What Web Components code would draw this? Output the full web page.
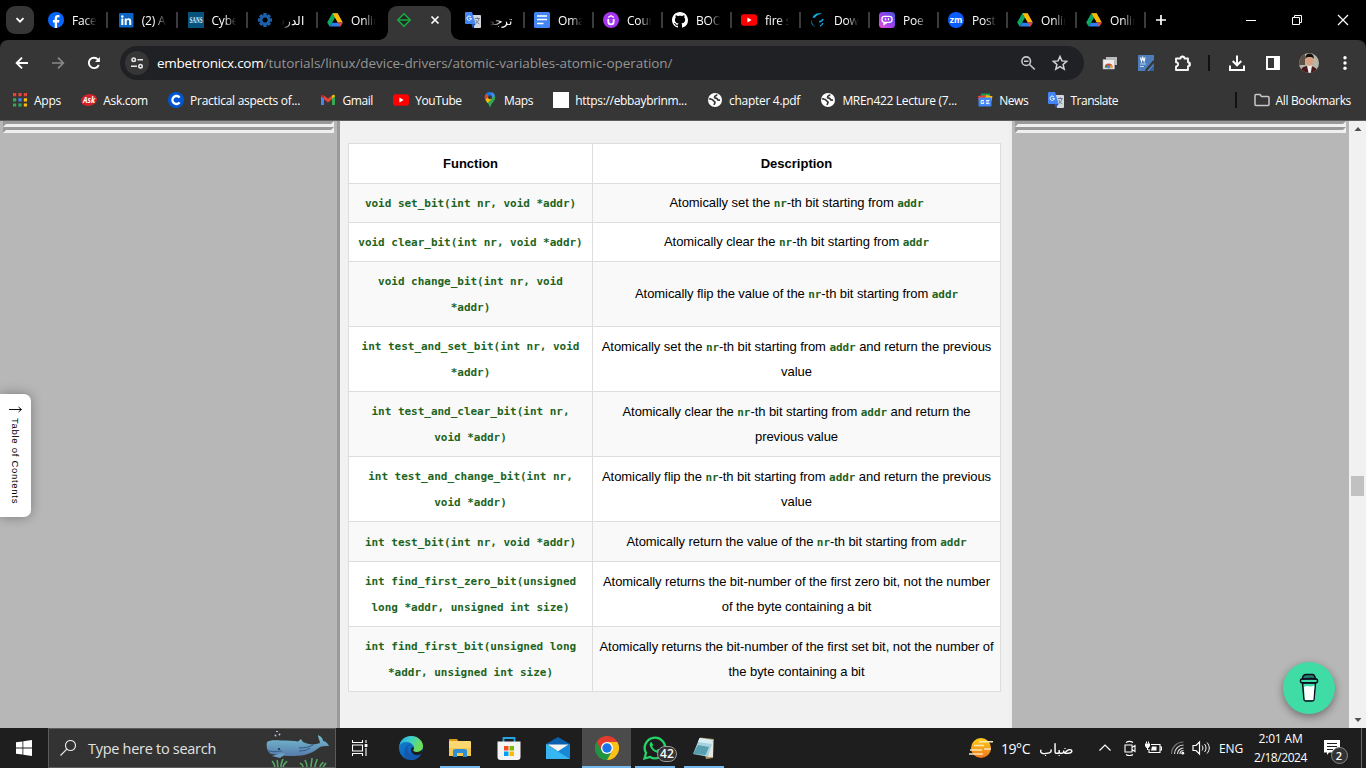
<!DOCTYPE html>
<html lang="en">
<head>
<meta charset="utf-8">
<title>Atomic operations</title>
<style>
html,body{margin:0;height:100%;overflow:hidden;background:#000}
body{font-family:"Open Sans","Noto Sans",sans-serif}
</style>
</head>
<body>
<desktop-screen></desktop-screen>
<script>
const ICONS = {
chev:['0 0 16 16','<path d="M4.500 6.200 8 9.700l3.500-3.500" fill="none" stroke="#fff" stroke-width="1.800"/>'],
fb:['0 0 16 16','<circle cx="8" cy="8" r="8" fill="#0866ff"/><path d="M6.700 16V10.500H4.900V8h1.800V6.500c0-2.400 1.200-3.500 3.200-3.500.7 0 1.300.1 1.600.2v2.100h-1.100c-1 0-1.300.5-1.300 1.300V8h2.300l-.4 2.500H9.100V16z" fill="#fff"/>'],
li:['0 0 16 16','<rect x="1" y="1" width="14.500" height="14.500" rx="1" fill="#0a66c2"/><path d="M3.300 6.500h2v6.600h-2zM6.700 6.500h2v.9c.4-.7 1.100-1.100 2-1.100 1.800 0 2.500 1.100 2.500 3v3.800h-2V9.700c0-1-.2-1.700-1.100-1.700-1 0-1.400.7-1.400 1.700v3.400h-2z" fill="#fff"/><circle cx="4.300" cy="4.500" r="1.200" fill="#fff"/>'],
sans:['0 0 16 16','<path fill="#07527c" d="M0 0h16v16H0z"/><text x="8" y="11" font-family="Liberation Serif" font-weight="bold" font-size="8.500" text-anchor="middle" textLength="13" lengthAdjust="spacingAndGlyphs" fill="#e4eff6">SANS</text>'],
gear:['0 0 16 16','<path d="M8 1v14M1 8h14M3.100 3.100l9.800 9.800M12.900 3.100l-9.800 9.800" stroke="#1d5fa8" stroke-width="3.400"/><circle cx="8" cy="8" r="5.300" fill="#1d5fa8"/><circle cx="8" cy="8" r="2.500" fill="#000"/>'],
drive:['0 0 16 16','<path d="M5.300 1.300h5.400L8 6z" fill="#11893f"/><path d="M10.700 1.300 15.800 10.400h-5.300L5.300 1.300z" fill="#ffba00"/><path d="M5.300 1.300 8 6l-2.600 4.500L2.600 14.600.2 10.400z" fill="#0da960"/><path d="M5.300 10.400h10.500l-2.500 4.200H2.700z" fill="#2f7df0"/><path d="M10.500 10.400h5.300l-2.500 4.200z" fill="#ea4335"/><path d="M8 6l2.600 4.400H5.400z" fill="#000"/>'],
embed:['0 0 16 16','<path d="M8 1.700 14.300 8 8 14.300 1.700 8z" fill="#202a22" stroke="#19b348" stroke-width="1.300"/><path d="M3 8h10" stroke="#19a943" stroke-width="1.500"/>'],
x:['0 0 16 16','<path d="M4.500 4.500l7 7M11.500 4.500l-7 7" stroke="#fff" stroke-width="1.700"/>'],
trans:['0 0 16 16','<path d="M6 3h9a1 1 0 0 1 1 1v11a1 1 0 0 1-1 1H9z" fill="#d3d8df"/><path d="M1 0h6l3.700 12H1a1 1 0 0 1-1-1V1a1 1 0 0 1 1-1z" fill="#4385f4"/><path d="M7.500 16l3.200-4H6.400z" fill="#2455b5"/><path d="M6.400 6.400A2.200 2.200 0 1 1 5.800 4.700M4.400 6.400h2" stroke="#fff" fill="none"/><path d="M9.800 6.500h5M12.300 5.300v1.200M14 6.600c-.5 2.500-1.800 4-3.300 5M10.800 8c.8 2 2 3.200 3.500 4" stroke="#69778a" fill="none"/>'],
docs:['0 0 16 16','<rect width="16" height="16" rx="1.500" fill="#4285f4"/><path d="M3 4h10M3 7.500h10M3 11.500h6.500" stroke="#fff" stroke-width="1.600"/>'],
udemy:['0 0 16 16','<circle cx="8" cy="8" r="8" fill="#a435f0"/><path d="M5.300 7v2.700a2.700 2.700 0 0 0 5.400 0V7" stroke="#fff" stroke-width="1.800" fill="none"/><path d="M5 5.500 8 3.700l3 1.800" stroke="#fff" stroke-width="1.300" fill="none"/>'],
gh:['0 0 16 16','<path fill="#fff" d="M8 0C3.580 0 0 3.580 0 8c0 3.540 2.290 6.530 5.470 7.590.4.070.55-.17.55-.38 0-.19-.01-.82-.01-1.490-2.010.37-2.530-.49-2.690-.94-.09-.23-.48-.94-.82-1.130-.28-.15-.68-.52-.01-.53.63-.01 1.080.58 1.230.82.72 1.210 1.870.87 2.330.66.07-.52.28-.87.51-1.070-1.780-.2-3.640-.89-3.640-3.950 0-.87.31-1.590.82-2.150-.08-.2-.36-1.020.08-2.120 0 0 .67-.21 2.200.82.64-.18 1.320-.27 2-.27s1.360.09 2 .27c1.530-1.040 2.200-.82 2.200-.82.44 1.100.16 1.920.08 2.120.51.56.82 1.270.82 2.150 0 3.070-1.870 3.750-3.650 3.950.29.25.54.73.54 1.480 0 1.070-.01 1.930-.01 2.200 0 .21.15.46.55.38A8.013 8.013 0 0 0 16 8c0-4.420-3.580-8-8-8z"/>'],
yt:['0 0 16 16','<rect y="2.300" width="16" height="11.400" rx="2.600" fill="#f00"/><path d="M6.400 5.600v4.800L10.600 8z" fill="#fff"/>'],
flow:['0 0 16 16','<path d="M2.500 5.800C4 2 7.500.5 12 1.800 9 2.300 6 3.300 4.800 5.800z" fill="#15b0e8"/><path d="M2 7.500c-.7 3 1 6 3.800 7.300-4-.6-5.800-4.300-3.800-7.300z" fill="#087db5"/><path d="M9 9.700c2 0 3.500-1 4-2.700M10 14c1.500-.3 2.500-1.200 2.800-3" stroke="#0c9bd2" stroke-width="1.500" fill="none"/>'],
poe:['0 0 16 16','<defs><linearGradient id="g" x1="1" y1="0" x2="0" y2="1"><stop stop-color="#4053d8"/><stop offset=".5" stop-color="#9a41ee"/><stop offset="1" stop-color="#e755d5"/></linearGradient></defs><rect width="16" height="16" rx="3.500" fill="url(#g)"/><rect x="3" y="4.300" width="10" height="6" rx="2.500" fill="none" stroke="#fff" stroke-width="1.300"/><path d="M6.500 6.300v2M9.500 6.300v2M5 10v2.500l3-2" stroke="#fff" stroke-width="1.300" fill="none"/>'],
zm:['0 0 16 16','<circle cx="8" cy="8" r="8" fill="#0b5cff"/><text x="8" y="10.500" font-family="Open Sans" font-weight="bold" font-size="8.500" text-anchor="middle" fill="#fff" textLength="12.500" lengthAdjust="spacingAndGlyphs">zm</text>'],
plus:['0 0 16 16','<path d="M8 3v10M3 8h10" stroke="#fff" stroke-width="1.700"/>'],
min:['0 0 16 16','<path d="M3 8.500h10" stroke="#fff"/>'],
max:['0 0 16 16','<path d="M3.500 5.500h7v7h-7zM5.500 5V3.500h7v7H11" fill="none" stroke="#fff"/>'],
close:['0 0 16 16','<path d="M3 3l10 10M13 3 3 13" stroke="#fff" stroke-width="1.200"/>'],
back:['0 0 16 16','<path d="M14 8H3M8 2.700 2.700 8 8 13.300" stroke="#fff" stroke-width="1.900" fill="none"/>'],
fwd:['0 0 16 16','<path d="M2 8h11M8 2.700 13.300 8 8 13.300" stroke="#898989" stroke-width="1.700" fill="none"/>'],
reload:['0 0 16 16','<path d="M12.800 10A5.200 5.200 0 1 1 12 4.500L13 6" stroke="#fff" stroke-width="1.900" fill="none"/><path d="M13.900 2v5H9z" fill="#fff"/>'],
tune:['0 0 16 16','<g stroke="#e6e6e6" stroke-width="1.600" fill="none"><circle cx="4.700" cy="4.700" r="1.700"/><path d="M8.500 4.700H14M2 11.200h6"/><circle cx="11.500" cy="11.200" r="1.700"/></g>'],
zoomout:['0 0 16 16','<g stroke="#c8c8c8" stroke-width="1.600" fill="none"><circle cx="6.200" cy="6.200" r="4.300"/><path d="M9.500 9.500l5.300 5M4 6.200h4.400"/></g>'],
star:['0 0 16 16','<path d="M8 1.500l1.900 4.400 4.800.4-3.600 3.200 1.100 4.700L8 11.700l-4.200 2.500 1.100-4.700L1.300 6.300l4.800-.4z" fill="none" stroke="#d4d4d4" stroke-width="1.500"/>'],
rdp:['0 0 16 16','<path d="M4 2h11v8H4z" fill="#bbb" /><path d="M1 4.500h11.500V14H1z" fill="#eee" stroke="#aaa" stroke-width=".6"/><path d="M2.700 12.500a4 4 0 0 1 8 0z" fill="#db4437"/><path d="M2.700 12.500 4 9.800l2 2.700z" fill="#0f9d58"/><path d="M9 9.500l1.700 3H7.500z" fill="#f4b400"/><circle cx="6.700" cy="12" r="1.600" fill="#4285f4"/>'],
word:['0 0 16 16','<path d="M0 0h16v6L7 16H0z" fill="#4d7dbb"/><path d="M8.500 16 16 7.500V16z" fill="#356199"/><path d="M7.500 15.500 16 5.500" stroke="#363636" stroke-width="1.300"/><path d="M10 16l6-6.500" stroke="#7fa3d2" stroke-width=".8"/><path d="M2.500 2.300l1 4 1.300-3.800 1.300 3.800 1-4" fill="none" stroke="#fff" stroke-width="1.100"/><path d="M2 9h6M2 11.500h4" stroke="#c4d5ec"/>'],
puzzle:['0 0 18 18','<path d="M2 4.500h4.500a2 2 0 0 1 4 0H14V8.200a2 2 0 0 1 0 4V16H2v-3.600a2.100 2.100 0 0 0 0-4.200z" fill="none" stroke="#f4f4f4" stroke-width="1.900" stroke-linejoin="round"/><path d="M6.800 3.500a1.700 1.700 0 0 1 3.400 0zM14.500 8.500a1.700 1.700 0 0 1 0 3.400z" fill="#fff"/>'],
dl:['0 0 18 18','<path d="M9 1.500v9M4.700 7 9 11.300 13.300 7M2 11.500V15.900h14v-4.400" fill="none" stroke="#fff" stroke-width="2"/>'],
panel:['0 0 16 16','<path d="M2 2h12v12H2z" fill="none" stroke="#fff" stroke-width="1.900"/><path d="M9 2h5v12H9z" fill="#fff"/>'],
avatar:['0 0 20 20','<defs><clipPath id="c"><circle cx="10" cy="10" r="10"/></clipPath></defs><g clip-path="url(#c)"><path fill="#b9b4a8" d="M0 0h20v20H0z"/><path fill="#5d5145" d="M0 0h6v12H0z"/><path d="M1 20c1-6 4-7 9-7s8 2 9 7z" fill="#4a1819"/><path d="M8 12.500h5L11.800 20H9.500z" fill="#eee"/><ellipse cx="10.500" cy="8" rx="3.500" ry="5" fill="#d99f80"/><path d="M6.500 6C6 3 7.500 .5 10.500.5S15.500 3 14.500 6c-.5-1.500-1.500-2-4-2S7 4.500 6.500 6z" fill="#15100e"/></g>'],
dots:['0 0 16 16','<g fill="#fff"><circle cx="8" cy="2.800" r="1.700"/><circle cx="8" cy="8" r="1.700"/><circle cx="8" cy="13.200" r="1.700"/></g>'],
apps:['0 0 16 16','<path fill="#ea4335" d="M1 1h3.200v3.200H1zM6.400 1h3.200v3.200H6.400zM11.800 1H15v3.200h-3.200z"/><path fill="#34a853" d="M1 6.200h3.200v3.200H1zM1 11.400h3.200v3.200H1z"/><path fill="#4285f4" d="M6.400 6.200h3.200v3.200H6.400z"/><path fill="#fbbc05" d="M11.800 6.200H15v3.200h-3.200zM11.800 11.400H15v3.200h-3.200z"/><path fill="#34a853" d="M6.400 11.400h3.200v3.200H6.400z"/>'],
ask:['0 0 16 16','<ellipse cx="8" cy="8" rx="8" ry="6" transform="rotate(-12 8 8)" fill="#d2232a"/><text x="8" y="11" font-family="Open Sans" font-style="italic" font-weight="bold" font-size="8" text-anchor="middle" textLength="12" lengthAdjust="spacingAndGlyphs" fill="#fff">Ask</text>'],
ccc:['0 0 16 16','<circle cx="8" cy="8" r="8" fill="#0056d2"/><path d="M11.600 10.400a4 4 0 1 1 0-4.800" fill="none" stroke="#fff" stroke-width="2.300"/>'],
gmail:['0 0 16 16','<path d="M1 3.500V13h3V6z" fill="#4285f4"/><path d="M15 3.500V13h-3V6z" fill="#34a853"/><path d="M1 4.200 4 6.500V3.700C3 2 1 2.800 1 4.200z" fill="#c5221f"/><path d="M15 4.200 12 6.500V3.700c1-1.700 3-.9 3 .5z" fill="#fbbc04"/><path d="M4 3.600 8 6.800l4-3.200v3.700l-4 3.200-4-3.200z" fill="#ea4335"/>'],
maps:['0 0 16 16','<path d="M8 0a5.200 5.200 0 0 1 5.200 5.200C13.200 9.500 9 10.500 8 16 7 10.500 2.800 9.500 2.800 5.200A5.200 5.200 0 0 1 8 0z" fill="#34a853"/><path d="M8 5 3.900 2A5.200 5.200 0 0 1 9.800.3z" fill="#1a73e8"/><path d="M9.800.3a5.200 5.200 0 0 1 3.200 3.500L8 7z" fill="#4285f4"/><path d="M3.900 2A5.200 5.200 0 0 0 3.500 7.800L8 5z" fill="#ea4335"/><path d="M3.500 7.800 6 5.500 9.500 7 5.500 11z" fill="#fbbc04"/><circle cx="8" cy="5.200" r="2" fill="#363636"/>'],
white:['0 0 16 16','<path d="M0 0h16v16H0z" fill="#fff"/>'],
globe:['0 0 16 16','<circle cx="8" cy="8" r="7" fill="#fff"/><path d="M2.200 6.500c1.500 1 3.300.5 3.800 1.700.5 1.300 2 .8 2 2 0 1-1 1.500-.7 2.800M10 2.500C9.500 4 7.500 3.800 7.500 5.200s2.300.6 2.800 1.900c.4 1 1.200 1.300 2.700.9" stroke="#363636" stroke-width="1.700" fill="none"/>'],
news:['0 0 16 16','<path d="M4 1.500h9V8H4z" fill="#0f9d58"/><path d="M1 4l9-1 1 6-9 1z" fill="#ea4335"/><path d="M9 3l6.500 1.300L14.500 9 8 8z" fill="#fbbc04"/><rect x="1.500" y="5.500" width="13" height="9" rx="1" fill="#4285f4"/><path d="M7 8.500H4.200v3h2.500V10H5.500M9 8.500h3.500M9 10h3M9 11.600h3.500" stroke="#fff" stroke-width=".9" fill="none"/>'],
folder:['0 0 16 16','<path d="M1 3.500a1 1 0 0 1 1-1h4l1.500 2H14a1 1 0 0 1 1 1V12.500a1 1 0 0 1-1 1H2a1 1 0 0 1-1-1z" fill="none" stroke="#c7c7c7" stroke-width="1.500"/>'],
start:['0 0 16 16','<path fill="#fff" d="M0 2.300 6.500 1.400v6.200H0zM7.300 1.300 16 0v7.600H7.300zM0 8.400h6.500v6.200L0 13.700zM7.300 8.400H16V16l-8.700-1.300z"/>'],
search:['0 0 16 16','<g fill="none" stroke="#e8e8e8" stroke-width="1.150"><circle cx="10.500" cy="5.500" r="5"/><path d="M6.800 9.200.5 15.500"/></g>'],
whale:['0 0 66 38','<defs><linearGradient id="w" x1="0" y1="0" x2="0" y2="1"><stop stop-color="#79bfd0"/><stop offset=".6" stop-color="#6397bc"/><stop offset="1" stop-color="#557bab"/></linearGradient></defs><path d="M2 13c2-2 8-2 14-1.500 7 0 12 0 17 1l3-2.500 2 3c6 3 12 3 17 1 0-2-2-5-2-8 4 2 5 4 5 6 2 0 5 2 6 5-4 0-7 0-9 1-7 6-15 9-26 9-5 0-9 0-13-1L6 25c-4-2-5-8-4-12z" fill="url(#w)"/><path d="M2 21c5 3 11 1 15 1M34 19c6 0 10-1 14-3M34 22c5 0 8-1 11-3" stroke="#36597f" fill="none"/><path d="M7 27l9-3 5 1-6 4z" fill="#6a9fc4"/><circle cx="14" cy="20" r="1.100" fill="#17324b"/><path d="M10 7l1-1M14 5l1 1M12 2v1" stroke="#b5bce9" stroke-width="2"/><path d="M10 38c-1-3-1-4-3-6m6 6c-1-4 0-5-1-7m4 7c0-4 1-5 2-8m0 8c1-4 3-4 4-6M38 38c0-3-2-3-3-4m7 4c0-4-1-4-2-7m6 7c0-4 1-5 1-9m3 9c0-4 2-5 2-8m3 8c0-3 3-3 3-5m0 5 3-4" stroke="#55a866" stroke-width="1.600" fill="none"/>'],
task:['0 0 16 16','<path d="M.5 0v2.500h10V0M.5 16v-2.500h10V16M.5 5h10v6H.5zM14 0v3M14 8v8" fill="none" stroke="#fff" stroke-width="1.100"/><path d="M12.700 4h2.700v3h-2.700z" fill="#fff"/>'],
edge:['0 0 24 24','<defs><linearGradient id="e" x1="0" y1="0" x2="1" y2=".3"><stop stop-color="#25a9de"/><stop offset=".5" stop-color="#3fd0c8"/><stop offset="1" stop-color="#72df50"/></linearGradient><linearGradient id="f" x1="0" y1="0" x2="1" y2="1"><stop stop-color="#1185d7"/><stop offset="1" stop-color="#0b4ea4"/></linearGradient></defs><circle cx="12" cy="12" r="12" fill="url(#f)"/><path d="M.3 10C1.500 3.500 6.500 0 12 0c7 0 12 5 12 10 0 4-3 6-6.500 6-3 0-4-1-3-2.500.8-1 .7-2.500-.2-4C12.500 7 10 6 7.500 6 4 6 1.500 7.500.3 10z" fill="url(#e)"/><path d="M8.500 12.500c0 5 4 8.500 9.500 7 1.500-.4 3-1.200 4-1.500-2 3.500-5 6-9.500 6C6 23.500 4 18 6.500 12c1-2.300 3-4 5-3.500-1.800.8-3 2-3 4z" fill="#1458ad"/><path d="M14.500 13.500c-1 1.500 0 2.500 3 2.500 2.500 0 4.500-.8 5.800-2.500.5 1 .2 3-.8 4.500-3 1.500-6.500 1.500-9-.5-1.500-1.500-2-3.500-1-5.500 1-1.500 3-.5 2 1.500z" fill="#1d1d1d"/>'],
explorer:['0 0 24 24','<path d="M1 3h8l2 3H1z" fill="#dc9a1c"/><path d="M1 5h21a1 1 0 0 1 1 1v13H1z" fill="#fbd872"/><path d="M1 12h22v8H1z" fill="#f5c84f"/><path d="M5 21v-6a2 2 0 0 1 2-2h10a2 2 0 0 1 2 2v6h-4v-4H9v4z" fill="#2f8fd5"/>'],
store:['0 0 24 24','<path d="M6.500 6V2h11v4" fill="none" stroke="#27a4e8" stroke-width="1.800"/><path d="M.5 5.500h23V21a3 3 0 0 1-3 3h-17a3 3 0 0 1-3-3z" fill="#f4f4f4"/><path fill="#f04f23" d="M7 10h4.500v4.500H7z"/><path fill="#7fba00" d="M12.500 10H17v4.500h-4.500z"/><path fill="#00a1f1" d="M7 15.500h4.500V20H7z"/><path fill="#ffb900" d="M12.500 15.500H17V20h-4.500z"/>'],
mail:['0 0 24 24','<path d="M0 8 12 1l12 7v2H0z" fill="#0860ae"/><path d="M0 8v15h24z" fill="#45bff3"/><path d="M24 8v15L10 14.500z" fill="#1788d8"/><path d="M0 8l12 7.500L24 23H0z" fill="#35b6f0"/><path d="M1.500 8.500h21L12 15.200z" fill="#f5f5f5"/>'],
chrome:['0 0 24 24','<path d="M12 12V6h10.400A12 12 0 0 1 12 24z" fill="#fbc116"/><path d="M12 12l5.200 3L12 24A12 12 0 0 1 1.600 6z" fill="#229342"/><path d="M12 12 6.800 15 1.600 6A12 12 0 0 1 22.400 6H12z" fill="#e33b2e"/><path d="M1.600 6 6.800 15l5.200 3v6A12 12 0 0 1 1.600 6z" fill="#229342"/><circle cx="12" cy="12" r="6" fill="#fff"/><circle cx="12" cy="12" r="4.700" fill="#1a73e8"/>'],
wa:['0 0 24 24','<path d="M1.500 22.500 3 17A10.300 10.300 0 1 1 7 21z" fill="none" stroke="#25d366" stroke-width="2.300"/><path d="M8.500 6c-2 .5-2.500 3-.8 5.800 2 3.200 5 5.200 7.600 5.200 2 0 3-1.600 2.700-2.800l-3-1.500-1.500 1.700c-2-.8-3.400-2-4.300-4l1-1.300z" fill="#25d366"/>'],
note:['0 0 24 24','<path d="M8 1.500 22 3l-1 19-7 1z" fill="#b39463"/><path d="M7.500 2 21 4l-3.500 17L1 18z" fill="#a6d2df"/><path d="M7.500 2 21 4l-1 4L6 6z" fill="#d7edf1"/><path d="M6 9l11 2-3.500 8L1 18z" fill="#579eae"/><path d="M16 21 21 4v17z" fill="#e6e6df"/>'],
weather:['0 0 24 22','<defs><linearGradient id="s" x1="0" y1="0" x2="0" y2="1"><stop stop-color="#ffd11b"/><stop offset="1" stop-color="#f17418"/></linearGradient></defs><circle cx="12" cy="11" r="10" fill="url(#s)"/><path d="M10 4.800h14M5 8.500h10M1 13h12M15 12h7M0 17h14" stroke="#f8e6bd" stroke-width="1.600"/>'],
caret:['0 0 16 16','<path d="M2.500 10.500 8 5l5.500 5.500" stroke="#fff" stroke-width="1.200" fill="none"/>'],
cam:['0 0 16 16','<path d="M3 5h7v7H3zM10 7.500l3-2v6l-3-2M4 2.500c2-1.300 5-1.300 7 0M4 14.500c2 1.300 5 1.300 7 0" fill="none" stroke="#fff" stroke-width="1.100"/>'],
bat:['0 0 18 16','<path d="M7 4.500h9v8H5V9M16.500 7h1v3h-1" fill="none" stroke="#fff" stroke-width="1.100"/><path d="M8 6.500h4.500v4H7zM1 3.500h5v2.500L4.500 8h-2L1 6z" fill="#fff"/><path d="M2.500 1.500v2M4.500 1.500v2M3.500 8v2" stroke="#fff"/>'],
wifi:['0 0 16 16','<g fill="none" stroke-width="1.200"><path d="M1.500 14A12 12 0 0 1 13.500 2" stroke="#777"/><path d="M4.500 14A9 9 0 0 1 13.500 5M7.500 14a6 6 0 0 1 6-6M10 14a3.500 3.500 0 0 1 3.500-3.500" stroke="#ddd"/></g><circle cx="12.800" cy="13.200" r="1.400" fill="#fff"/>'],
vol:['0 0 18 16','<path d="M1 5.500h3L7.500 2v12L4 10.500H1z" fill="none" stroke="#fff" stroke-width="1.200"/><path d="M10 5.500c1.200 1.500 1.200 3.500 0 5M12.500 4c2 2.500 2 5.500 0 8M15 2.500c3 3.500 3 7.500 0 11" fill="none" stroke="#fff"/>'],
notif:['0 0 16 16','<path d="M0 0h16v12.500H5L3 15v-2.500H0z" fill="#fff"/><path d="M3 3.500h10M3 6.500h10M3 9.500h6" stroke="#1d1d1d"/>'],
cup:['0 0 20 30','<path d="M3.500 10h13l-1.500 16.500a1.700 1.700 0 0 1-1.700 1.500H6.700A1.700 1.700 0 0 1 5 26.500z" fill="#40dca5" stroke="#0d0c22" stroke-width="1.500"/><path d="M5 14c3-2.500 6 1 10.500-1.500L14.300 27H5.900z" fill="#fff"/><rect x="1.500" y="6" width="17" height="3.800" rx="1.500" fill="#40dca5" stroke="#0d0c22" stroke-width="1.500"/><path d="M3.500 6c0-4 2-4.500 4-4.500h6c2 0 2.500 2 3 4.500-3-1-8-.5-13 0z" fill="#238068" stroke="#0d0c22" stroke-width="1.500"/>'],
up:['0 0 16 16','<path d="M4.500 10h7L8 6z" fill="#505050"/>'],
down:['0 0 16 16','<path d="M4.500 6h7L8 10z" fill="#505050"/>']
};
const make = (name, html, after) => customElements.define(name, class extends HTMLElement {
  connectedCallback(){
    if(this.shadowRoot) return;
    const root = this.attachShadow({mode:'open'});
    root.innerHTML = typeof html === 'function' ? html(this) : html;
    if(after) after(this, root);
  }
});
const A = (el,n,d='') => el.getAttribute(n) ?? d;

make('ui-icon', el => {
  const [vb,body] = ICONS[A(el,'name')];
  const w = A(el,'w','16'), h = A(el,'h',w);
  return `<style>:host{display:block;flex:none;width:${w}px;height:${h}px}svg{display:block;width:100%;height:100%}</style><svg viewBox="${vb}">${body}</svg>`;
});

/* A single line whose tracking is adjusted so that it fills the width "w". */
make('fit-text', el => `<style>:host{display:block;flex:none;width:${A(el,'w')}px;white-space:pre}span{display:inline-block;transform-origin:0 50%}</style><span><slot></slot></span>`,
 (el,root) => {
  const fit = () => {
    const s = root.querySelector('span'), w = +A(el,'w'), n = [...el.textContent].length;
    s.style.letterSpacing = '0';
    const real = s.getBoundingClientRect().width;
    if(!real || !n) return;
    if(el.hasAttribute('scale')) s.style.transform = `scaleX(${w/real})`;
    else s.style.letterSpacing = ((w-real)/n)+'px';
  };
  fit();
 });

make('browser-tab', el => `<style>
:host{display:flex;flex:none;box-sizing:border-box;width:var(--pitch,69px);height:40px;align-items:center;font-size:12px;color:#fff}
.t{width:25px;margin-left:8px;overflow:hidden;white-space:nowrap;letter-spacing:-.2px;-webkit-mask-image:linear-gradient(90deg,#000 50%,transparent 98%)}
.t.rtl{direction:rtl;width:23px;-webkit-mask-image:linear-gradient(270deg,#000 50%,transparent 98%)}
i{width:2px;height:16px;background:#3b3b3b;margin-left:auto;margin-right:9.500px}
</style><ui-icon name="${A(el,'icon')}"></ui-icon><div class="t ${el.hasAttribute('rtl')?'rtl':''}"><slot></slot></div>${el.hasAttribute('nosep')?'':'<i></i>'}`);

make('tab-strip', `<style>
:host{display:flex;height:40px;background:#000;align-items:center}
.menu{width:28px;height:28px;border-radius:9px;background:#363636;margin:0 14px 0 6px;display:grid;place-items:center}
.g1{display:flex;--pitch:69.750px;width:340px}
.active{position:relative;width:63px;height:34px;margin-top:6px;background:#363636;border-radius:9px 9px 0 0;display:flex;align-items:center;box-sizing:border-box;padding:0 8px 6px;justify-content:space-between}
.active:before,.active:after{content:"";position:absolute;bottom:0;width:9px;height:9px;background:radial-gradient(circle at 0 0,#000 8.500px,#363636 9px)}
.active:before{left:-9px}.active:after{right:-9px;background:radial-gradient(circle at 100% 0,#000 8.500px,#363636 9px)}
.g2{display:flex;margin-left:14px}
.win{display:flex;margin-left:auto;gap:30px;margin-right:15px}
</style>
<div class="menu"><ui-icon name="chev"></ui-icon></div>
<div class="g1"><browser-tab icon="fb">Face</browser-tab><browser-tab icon="li">(2) A</browser-tab><browser-tab icon="sans">Cybe</browser-tab><browser-tab icon="gear" rtl>الدرس</browser-tab><browser-tab icon="drive" nosep>Onlin</browser-tab></div>
<div class="active"><ui-icon name="embed"></ui-icon><ui-icon name="x"></ui-icon></div>
<div class="g2"><browser-tab icon="trans" rtl>ترجمة</browser-tab><browser-tab icon="docs">Oma</browser-tab><browser-tab icon="udemy">Cour</browser-tab><browser-tab icon="gh">BOO</browser-tab><browser-tab icon="yt">fire s</browser-tab><browser-tab icon="flow">Dow</browser-tab><browser-tab icon="poe">Poe</browser-tab><browser-tab icon="zm">Post</browser-tab><browser-tab icon="drive">Onlin</browser-tab><browser-tab icon="drive">Onlin</browser-tab></div>
<ui-icon name="plus" style="margin-left:-2px"></ui-icon>
<div class="win"><ui-icon name="min"></ui-icon><ui-icon name="max"></ui-icon><ui-icon name="close"></ui-icon></div>`);

make('tool-bar', `<style>
:host{display:flex;height:40px;padding-top:6px;box-sizing:border-box;align-items:flex-start;background:#363636;border-radius:8px 8px 0 0;color:#fff}
.nav{display:flex;gap:20px;width:106px;padding-left:14px;height:34px;align-items:center}
.omni{display:flex;align-items:center;width:964px;height:34px;border-radius:17px;background:#202124;box-sizing:border-box;padding:0 16px 0 5px;font-size:13.500px}
.info{width:24px;height:24px;border-radius:50%;background:#363636;display:grid;place-items:center;margin-right:8px}
.dim{color:#959595}.sp{flex:1}
.r{display:flex;flex:1;height:34px;align-items:center}
.c{width:36px;display:grid;place-items:center}
b{width:2px;height:16px;background:#111;margin:0 9px 0 7px}
</style>
<div class="nav"><ui-icon name="back"></ui-icon><ui-icon name="fwd"></ui-icon><ui-icon name="reload"></ui-icon></div>
<div class="omni"><div class="info"><ui-icon name="tune"></ui-icon></div><fit-text w="106.500">embetronicx.com</fit-text><fit-text w="409" class="dim">/tutorials/linux/device-drivers/atomic-variables-atomic-operation/</fit-text><div class="sp"></div><ui-icon name="zoomout" style="margin-right:16px"></ui-icon><ui-icon name="star"></ui-icon></div>
<div class="r"><div class="c" style="margin-left:8px"><ui-icon name="rdp"></ui-icon></div><div class="c"><ui-icon name="word"></ui-icon></div><div class="c" style="width:37px"><ui-icon name="puzzle" w="18"></ui-icon></div><b></b><div class="c"><ui-icon name="dl" w="18"></ui-icon></div><div class="c"><ui-icon name="panel"></ui-icon></div><div class="c"><ui-icon name="avatar" w="20"></ui-icon></div><div class="c"><ui-icon name="dots"></ui-icon></div></div>`);

make('book-mark', el => `<style>:host{display:flex;align-items:center;gap:6px;flex:none}</style><ui-icon name="${A(el,'icon')}"></ui-icon><fit-text w="${A(el,'w')}">${A(el,'label')}</fit-text>`);

make('bookmark-bar', `<style>
:host{display:flex;align-items:center;height:41px;box-sizing:border-box;border-bottom:1px solid #5d5d5d;background:#363636;color:#fff;font-size:12px;gap:20.300px;padding:0 15px 0 12px}
.sep{width:2px;height:16px;background:#111;margin-left:auto;margin-right:-4px}
</style>`+[['apps','Apps',27],['ask','Ask.com',44.5],['ccc','Practical aspects of...',110],['gmail','Gmail',30.500],['yt','YouTube',46.500],['maps','Maps',29],['white','https://ebbaybrinm...',111.500],['globe','chapter 4.pdf',71],['globe','MREn422 Lecture (7...',114.500],['news','News',29],['trans','Translate',47.500]].map(b=>`<book-mark icon="${b[0]}" label="${b[1]}" w="${b[2]}"></book-mark>`).join('')+`<div class="sep"></div><book-mark icon="folder" label="All Bookmarks" w="75.500"></book-mark>`);

make('inset-rules', `<style>:host{display:block;width:331px}div{box-sizing:border-box;height:6px;border:3px solid;border-color:#999 #efefef #efefef #999}</style><div></div><div></div>`);

const rows = [
 [39,['void set_bit(int nr, void *addr)'],[['Atomically set the `nr`-th bit starting from `addr`',254]]],
 [39,['void clear_bit(int nr, void *addr)'],[['Atomically clear the `nr`-th bit starting from `addr`',265]]],
 [65,['void change_bit(int nr, void','*addr)'],[['Atomically flip the value of the `nr`-th bit starting from `addr`',323]]],
 [65,['int test_and_set_bit(int nr, void','*addr)'],[['Atomically set the `nr`-th bit starting from `addr` and return the previous',389.500],['value',31]]],
 [65,['int test_and_clear_bit(int nr,','void *addr)'],[['Atomically clear the `nr`-th bit starting from `addr` and return the',348],['previous value',83]]],
 [65,['int test_and_change_bit(int nr,','void *addr)'],[['Atomically flip the `nr`-th bit starting from `addr` and return the previous',389],['value',31]]],
 [40,['int test_bit(int nr, void *addr)'],[['Atomically return the value of the `nr`-th bit starting from `addr`',340]]],
 [65,['int find_first_zero_bit(unsigned','long *addr, unsigned int size)'],[['Atomically returns the bit-number of the first zero bit, not the number',387],['of the byte containing a bit',149.500]]],
 [65,['int find_first_bit(unsigned long','*addr, unsigned int size)'],[['Atomically returns the bit-number of the first set bit, not the number of',394],['the byte containing a bit',136]]]
];
const code = s => s.replace(/`([^`]+)`/g,'<code>$1</code>');
make('function-table', `<style>
:host{display:grid;grid-template-columns:244px 407px;border:1px solid #ddd;border-bottom:0;width:651px;font:13px "Liberation Sans",Arial,sans-serif;color:#000;line-height:25.400px}
.c{box-sizing:border-box;border-bottom:1px solid #ddd;display:flex;flex-direction:column;align-items:center;justify-content:center;background:#fff;text-align:center}
.f{border-right:1px solid #ddd}
.f:not(.h){padding-top:1.500px}
.alt{background:#f9f9f9}
.h{height:40px;font-weight:700}
.m,code{font-family:"DejaVu Sans Mono",monospace;font-weight:700;font-size:11px;color:#1d641d}
code{line-height:1}
</style><div class="c f h">Function</div><div class="c h">Description</div>`+rows.map((r,i)=>{
 const k=i%2?'':'alt';
 return `<div class="c f ${k}" style="height:${r[0]}px">${r[1].map(l=>`<fit-text class="m" w="${l.length*6.6}">${l}</fit-text>`).join('')}</div><div class="c ${k}" style="height:${r[0]}px">${r[2].map(l=>`<fit-text w="${l[1]}">${code(l[0])}</fit-text>`).join('')}</div>`;
}).join(''));

make('web-page', `<style>
:host{display:grid;grid-template-columns:340px 672px 337px 17px;height:607px;background:#b7b7b7;position:relative;overflow:hidden}
.l{border-right:3px solid #9a9a9a;padding-left:3px}
.m{background:#f1f1f1;padding:22px 0 0 8px;border-right:3px solid #eee;box-sizing:border-box}
.r{padding-left:3px}
.sb{background:#f1f1f1;display:flex;flex-direction:column;align-items:center}
.th{width:13px;height:20px;background:#c1c1c1;margin-top:339px;margin-bottom:auto}
.toc{position:absolute;left:0;top:273px;width:31px;height:123px;background:#fff;border-radius:0 7px 7px 0;box-shadow:0 0 12px #0005;writing-mode:vertical-rl;display:flex;align-items:center;box-sizing:border-box;padding-top:12px;font:9.500px "Liberation Sans",sans-serif;color:#000}
.toc svg{flex:none;width:15px;height:7px;margin-bottom:5px}
.toc span{letter-spacing:.72px}
.fab{position:absolute;left:1283px;top:541px;width:52px;height:52px;border-radius:50%;background:#40dca5;box-shadow:0 3px 8px #0006;display:grid;place-items:center}
</style><div class="l"><inset-rules></inset-rules></div><div class="m"><function-table></function-table></div><div class="r"><inset-rules></inset-rules></div>
<div class="sb"><ui-icon name="up"></ui-icon><div class="th"></div><ui-icon name="down"></ui-icon></div>
<div class="toc"><svg viewBox="0 0 15 7"><path d="M1 3.500h12.500M10.500 1l3 2.500-3 2.500" fill="none" stroke="#111"/></svg><span>Table of Contents</span></div>
<div class="fab"><ui-icon name="cup" w="20" h="30"></ui-icon></div>`);

make('task-app', el => `<style>:host{display:grid;place-items:center;position:relative;width:48.800px;height:40px;flex:none}
:host([on]){background:#4b4b4b}
u{position:absolute;left:4px;right:5px;bottom:0;height:2px;background:#76b9ed}
:host([on]) u{left:0;right:0}
span{position:absolute;left:26px;top:18px;width:20px;height:16px;box-sizing:border-box;border:1px solid #999;border-radius:8px;background:#333;color:#fff;font:600 12px/13px "Open Sans",sans-serif;text-align:center}
</style><ui-icon name="${A(el,'icon')}" w="${A(el,'size','24')}"></ui-icon>${el.hasAttribute('run')||el.hasAttribute('on')?'<u></u>':''}${A(el,'badge')?`<span>${A(el,'badge')}</span>`:''}`);

make('task-bar', `<style>
:host{display:flex;align-items:center;height:40px;background:#1e1e1e;color:#fff}
.st{width:48px;display:grid;place-items:center}
.se{width:288px;height:40px;box-sizing:border-box;border:1px solid #5b5b5b;background:#333;display:flex;align-items:center;padding-left:11px;font-size:14.500px;color:#e2e2e2}
.se fit-text{margin-left:12px}
.tv{width:51px;display:flex;padding-left:16px;box-sizing:border-box}
.tray{margin-left:auto;display:flex;align-items:center;width:397px;height:40px;font-size:12px}
.clock{display:flex;flex-direction:column;align-items:center;width:54px;margin-left:10.500px;line-height:19px;margin-top:-1px}
.n{position:relative;margin-left:16px}
.n b{position:absolute;left:7px;top:7px;width:15px;height:15px;border:1px solid #888;border-radius:50%;background:#333;font:600 11px/15px "Open Sans",sans-serif;text-align:center}
.end{margin-left:auto;margin-right:4px;width:1px;height:40px;background:#666}
</style>
<div class="st"><ui-icon name="start"></ui-icon></div>
<div class="se"><ui-icon name="search"></ui-icon><fit-text w="128">Type here to search</fit-text><ui-icon name="whale" w="66" h="38" style="margin-left:49px"></ui-icon></div>
<div class="tv"><ui-icon name="task"></ui-icon></div>
<task-app icon="edge"></task-app><task-app icon="explorer" run></task-app><task-app icon="store"></task-app><task-app icon="mail"></task-app><task-app icon="chrome" on></task-app><task-app icon="wa" run badge="42"></task-app><task-app icon="note" run></task-app>
<div class="tray"><ui-icon name="weather" w="24" h="22"></ui-icon><fit-text w="29" style="margin-left:8px;font-size:14px">19°C</fit-text><fit-text w="35" scale dir="rtl" style="margin-left:9px;font-size:14px;direction:ltr">ضباب</fit-text>
<ui-icon name="caret" style="margin-left:23px"></ui-icon><ui-icon name="cam" style="margin-left:9px"></ui-icon><ui-icon name="bat" w="18" h="16" style="margin-left:6px"></ui-icon><ui-icon name="wifi" style="margin-left:8px"></ui-icon><ui-icon name="vol" w="18" h="16" style="margin-left:6px"></ui-icon><fit-text w="24" style="margin-left:9px">ENG</fit-text>
<div class="clock"><fit-text w="44">2:01 AM</fit-text><fit-text w="53">2/18/2024</fit-text></div>
<div class="n"><ui-icon name="notif"></ui-icon><b>2</b></div><div class="end"></div></div>`);

make('desktop-screen', `<style>:host{display:flex;flex-direction:column;width:1366px;height:768px;overflow:hidden;background:#000}</style><tab-strip></tab-strip><tool-bar></tool-bar><bookmark-bar></bookmark-bar><web-page></web-page><task-bar></task-bar>`);
</script>
</body>
</html>
